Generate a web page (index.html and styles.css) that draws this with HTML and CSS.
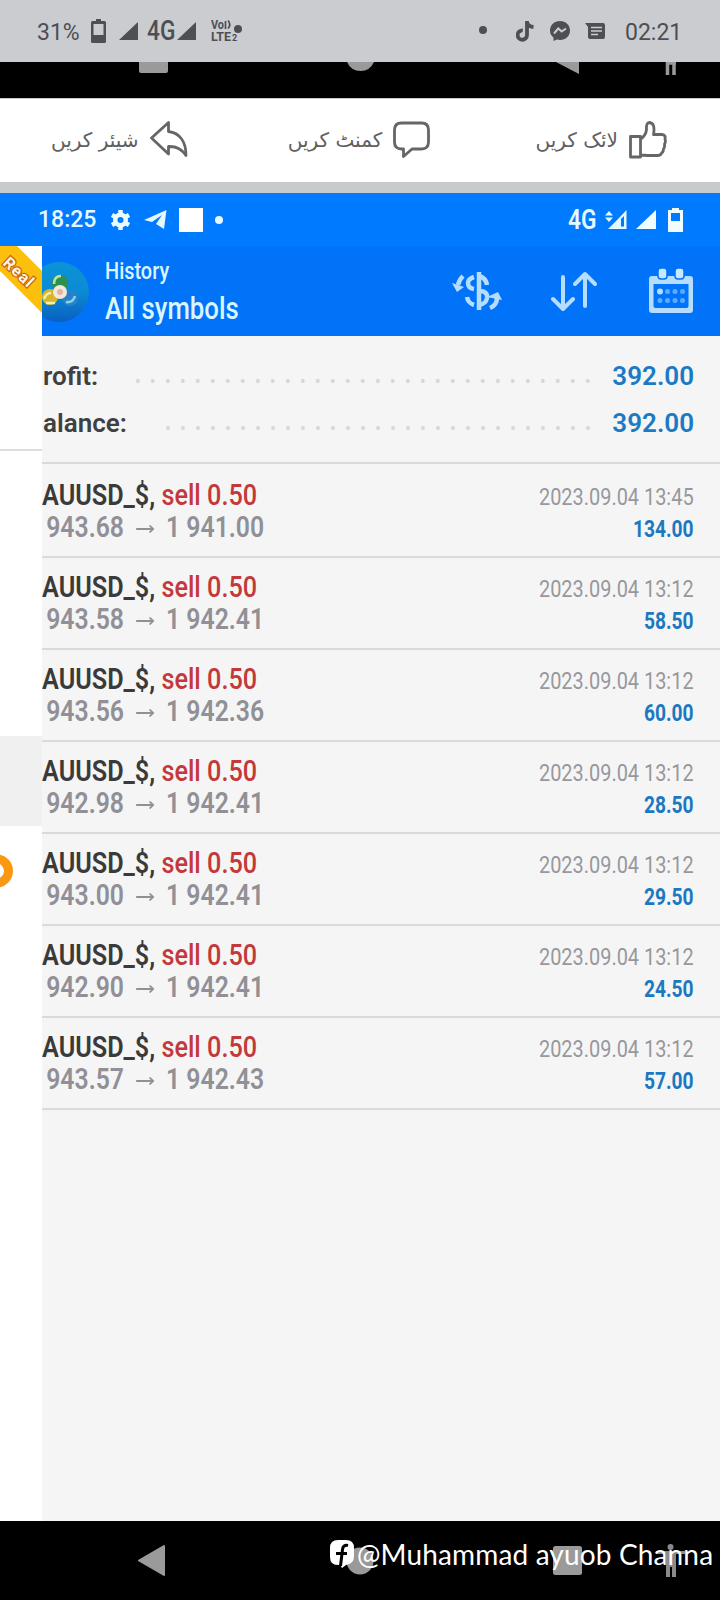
FILE: index.html
```html
<!DOCTYPE html>
<html lang="ur">
  <head>
    <meta charset="UTF-8" />
    <meta name="viewport" content="width=device-width, initial-scale=1.0" />
    <title>History</title>
    <link rel="stylesheet" href="styles.css">
  </head>
  <body>
    <div class="phone-status">
      <span class="battery-text">31%</span>
      <svg class="i-battery" width="15" height="24" viewBox="0 0 15 24"><path fill="#4d4f55" fill-rule="evenodd" d="M5 0h5v2h3.500q1.500 0 1.500 1.500v19q0 1.500-1.500 1.500h-12q-1.500 0-1.500-1.500v-19Q0 2 1.500 2H5zM2.500 5v11h10V5z" /></svg>
      <svg class="i-sig" width="19" height="18" viewBox="0 0 19 18"><path fill="#4d4f55" d="M19 0v18H0z" /></svg>
      <span class="net"><span class="narrow">4G</span></span>
      <svg width="19" height="18" viewBox="0 0 19 18"><path fill="#4d4f55" d="M19 0v18H0z" /></svg>
      <svg class="i-volte" width="32" height="24" viewBox="0 0 32 24" fill="#4d4f55">
        <text class="volte" x="0" y="10" textLength="13" lengthAdjust="spacingAndGlyphs">Vo</text>
        <path d="M14.500 2v8M17 1.500q3.500 4 0 8" fill="none" stroke="#4d4f55" stroke-width="1.700" />
        <text class="volte" x="0" y="22" textLength="20" lengthAdjust="spacingAndGlyphs">LTE</text>
        <text class="volte small" x="21" y="22">2</text>
        <circle cx="27" cy="10" r="4" />
      </svg>
      <span class="dot"></span>
      <svg class="i-tiktok" width="18" height="21" viewBox="0 0 18 21"><path fill="none" stroke="#4d4f55" stroke-width="3.800" d="M11 0v14a4.700 4.700 0 1 1-4.200-4.600M11 1q.6 4.500 6.500 5" /></svg>
      <svg class="i-messenger" width="20" height="20" viewBox="0 0 20 20"><path fill="#4d4f55" d="M10 0c5.700 0 10 4 10 9.500S15.700 19 10 19q-1.500 0-3-.4L3.500 20v-3.400Q0 13.800 0 9.500C0 4 4.300 0 10 0z" /><path d="M4 12.500l4.300-5 3.400 3 4.300-3" fill="none" stroke="#cacccf" stroke-width="2" /></svg>
      <svg class="i-message" width="20" height="16" viewBox="0 0 20 16"><path fill="#4d4f55" d="M0 0h18q2 0 2 2v12q0 2-2 2H5q-2 0-2-2V4z" /><path d="M6 4.500h11M6 8h11M6 11.500h7" stroke="#cacccf" stroke-width="1.500" /></svg>
      <span class="clock">02:21</span>
    </div>

    <svg class="nav-strip" width="720" height="36" viewBox="0 0 720 36">
      <path fill="#9a9a9a" d="M139 0h29v9q0 2-2 2h-25q-2 0-2-2zM347 0h27q-4 9-13.500 9T347 0zM556 0h23v12z" />
      <path fill="none" stroke="#9a9a9a" stroke-width="3.500" d="M667.500 13V0M674 13V0M666 1h10" />
    </svg>

    <div class="actions">
      <div class="action share">
        <span class="label">شیئر کریں</span>
        <svg width="38" height="38" viewBox="0 0 38 38"><path d="M1.500 17L18.500 1.500v9C30 12 36 21 36 34.500q-6-9.500-17.500-9V33z" /></svg>
      </div>
      <div class="action comment">
        <span class="label">کمنٹ کریں</span>
        <svg width="37" height="38" viewBox="0 0 37 38"><path d="M8.500 2h20q7 0 7 7v12q0 7-7 7H19l-8.500 7.500V28H8.500q-7 0-7-7V9q0-7 7-7z" /></svg>
      </div>
      <div class="action like">
        <span class="label">لائک کریں</span>
        <svg width="38" height="38" viewBox="0 0 38 38"><path d="M1.500 15.500h10v20.500h-10zM12 18q5-4 5.500-9.500Q17 1.500 20.500 1.500q6 .5 4 12h8.500q4 .5 3 4.500 1 3-.5 5 .5 3-1 5 0 3-2 4-.5 2.500-4 2.500h-10l-7-.5" /></svg>
      </div>
    </div>

    <div class="shot">
      <div class="shot-status">
        <span class="time">18:25</span>
        <svg class="i-gear" width="19" height="20" viewBox="0 0 19 20"><circle cx="9.500" cy="10" r="5.300" fill="none" stroke="#e9fbff" stroke-width="4.500" /><path d="M9.500 0v4M9.500 16v4M1 5l3.500 2M14.500 13l3.500 2M1 15l3.500-2M14.500 7L18 5" stroke="#e9fbff" stroke-width="4.500" /></svg>
        <svg class="i-plane" width="23" height="20" viewBox="0 0 23 20"><path fill="#e4f7ff" d="M22.500 0L20 19l-8-5L18 5 8 12 0 10z" /></svg>
        <span class="square"></span>
        <span class="dot"></span>
        <span class="net"><span class="narrow">4G</span></span>
        <svg class="i-data" width="22" height="20" viewBox="0 0 22 20"><path fill="#e4f9ff" d="M0 5.500L4 1l4 4.500zM0 7.500h8L4 12zM21.500 0v19H3L14 8z" /><path d="M19 6v10.500h-3V9z" fill="#0078ff" /></svg>
        <svg class="i-full" width="20" height="19" viewBox="0 0 20 19"><path fill="#f0fdff" d="M20 0v19H0z" /></svg>
        <svg width="15" height="24" viewBox="0 0 15 24"><path fill="#f0fdff" fill-rule="evenodd" d="M4 0h7v2h4v22H0V2h4zM3 5v8h9V5z" /></svg>
      </div>

      <div class="panes">
        <div class="drawer">
          <svg class="ribbon" width="42" height="70" viewBox="0 0 42 70"><path fill="#fbbf0c" d="M0 0h17l25 25v42L0 25z" /><text x="0" y="0" transform="translate(2 18) rotate(43)" textLength="35">Real</text></svg>
          <div class="drawer-line"></div>
          <div class="drawer-selected"></div>
          <svg class="badge" width="42" height="34" viewBox="0 0 42 34"><circle cx="-3.500" cy="17" r="12" fill="none" stroke="#fb9812" stroke-width="9" /></svg>
        </div>

        <div class="main">
          <div class="header">
            <svg class="logo" width="47" height="62" viewBox="0 0 47 62">
              <defs><linearGradient id="sky" x1="0" y1="0" x2="0" y2="1"><stop offset="0" stop-color="#0b93d8" /><stop offset=".5" stop-color="#0b8bd4" /><stop offset="1" stop-color="#0a5fc0" /></linearGradient></defs>
              <circle cx="17" cy="31" r="30" fill="url(#sky)" />
              <circle cx="18" cy="22" r="8" fill="#2f8f4e" />
              <path d="M12 23q0-8 7-8" fill="none" stroke="#b9e3a0" stroke-width="2.500" />
              <circle cx="8" cy="36" r="8" fill="#d6b52f" />
              <path d="M2 38q2-6 7-6M4 42h9" fill="none" stroke="#f8efa0" stroke-width="2.500" />
              <circle cx="28" cy="37" r="8" fill="#2683c8" />
              <path d="M24 41q7 1 9-6" fill="none" stroke="#8fd0ee" stroke-width="2.500" />
              <circle cx="18" cy="31" r="7" fill="#f4e9d6" />
              <circle cx="18" cy="31" r="3" fill="#e2b5a8" />
            </svg>
            <div class="titles">
              <div class="title">History</div>
              <div class="subtitle">All symbols</div>
            </div>
            <svg class="i-currency" width="50" height="40" viewBox="0 0 50 40" fill="none" stroke="#b5ddff" stroke-width="4.500">
              <path d="M27 1v38" />
              <path d="M27 5q7 2 8 9M27 20q9 0 8 7-1 6-8 7" />
              <path d="M22 6q-6 2-6 6 0 5 6 6M15 26q1 6 7 8M11 5q-4 4-5 9M38 37q7-3 7-10" />
              <path fill="#b5ddff" stroke="none" d="M0 12l12 4-7 5zM35 26l11-5 4 8z" />
            </svg>
            <svg class="i-sort" width="46" height="41" viewBox="0 0 46 41"><path fill="none" stroke="#b5ddff" stroke-width="4" stroke-linecap="round" stroke-linejoin="round" d="M12 6v32M2 28l10 10 10-10M34 35V3M24 13L34 3l10 10" /></svg>
            <svg class="i-calendar" width="44" height="46" viewBox="0 0 44 46">
              <path fill="#b5ddff" fill-rule="evenodd" d="M3 8h38q3 0 3 3v31q0 3-3 3H3q-3 0-3-3V11q0-3 3-3zM4.500 16v22q0 2 2 2h31q2 0 2-2V16z" />
              <rect x="9" y="0" width="9" height="11" rx="3" fill="#c9e8ff" stroke="#0073f8" stroke-width="1.500" />
              <rect x="26" y="0" width="9" height="11" rx="3" fill="#c9e8ff" stroke="#0073f8" stroke-width="1.500" />
              <circle cx="11" cy="23.500" r="3" fill="#b5ddff" />
              <g fill="#58adff"><circle cx="18.500" cy="23.500" r="2.500" /><circle cx="26" cy="23.500" r="2.500" /><circle cx="33.500" cy="23.500" r="2.500" /><circle cx="11" cy="32.500" r="2.500" /><circle cx="18.500" cy="32.500" r="2.500" /><circle cx="26" cy="32.500" r="2.500" /><circle cx="33.500" cy="32.500" r="2.500" /></g>
            </svg>
          </div>

          <div class="summary">
            <div class="total profit"><span>rofit:</span><span class="leader"></span><b>392.00</b></div>
            <div class="total balance"><span>alance:</span><span class="leader"></span><b>392.00</b></div>
          </div>

          <div class="deals">
            <div class="deal">
              <div class="left">
                <div class="symbol">AUUSD_$, <span class="sell">sell 0.50</span></div>
                <div class="price">943.68<svg class="arrow" viewBox="0 0 22 10"><path d="M0 5h20M16 1.500L20.500 5 16 8.500" /></svg>1 941.00</div>
              </div>
              <div class="right"><div class="date">2023.09.04 13:45</div><div class="amount">134.00</div></div>
            </div>
            <div class="deal">
              <div class="left">
                <div class="symbol">AUUSD_$, <span class="sell">sell 0.50</span></div>
                <div class="price">943.58<svg class="arrow" viewBox="0 0 22 10"><path d="M0 5h20M16 1.500L20.500 5 16 8.500" /></svg>1 942.41</div>
              </div>
              <div class="right"><div class="date">2023.09.04 13:12</div><div class="amount">58.50</div></div>
            </div>
            <div class="deal">
              <div class="left">
                <div class="symbol">AUUSD_$, <span class="sell">sell 0.50</span></div>
                <div class="price">943.56<svg class="arrow" viewBox="0 0 22 10"><path d="M0 5h20M16 1.500L20.500 5 16 8.500" /></svg>1 942.36</div>
              </div>
              <div class="right"><div class="date">2023.09.04 13:12</div><div class="amount">60.00</div></div>
            </div>
            <div class="deal">
              <div class="left">
                <div class="symbol">AUUSD_$, <span class="sell">sell 0.50</span></div>
                <div class="price">942.98<svg class="arrow" viewBox="0 0 22 10"><path d="M0 5h20M16 1.500L20.500 5 16 8.500" /></svg>1 942.41</div>
              </div>
              <div class="right"><div class="date">2023.09.04 13:12</div><div class="amount">28.50</div></div>
            </div>
            <div class="deal">
              <div class="left">
                <div class="symbol">AUUSD_$, <span class="sell">sell 0.50</span></div>
                <div class="price">943.00<svg class="arrow" viewBox="0 0 22 10"><path d="M0 5h20M16 1.500L20.500 5 16 8.500" /></svg>1 942.41</div>
              </div>
              <div class="right"><div class="date">2023.09.04 13:12</div><div class="amount">29.50</div></div>
            </div>
            <div class="deal">
              <div class="left">
                <div class="symbol">AUUSD_$, <span class="sell">sell 0.50</span></div>
                <div class="price">942.90<svg class="arrow" viewBox="0 0 22 10"><path d="M0 5h20M16 1.500L20.500 5 16 8.500" /></svg>1 942.41</div>
              </div>
              <div class="right"><div class="date">2023.09.04 13:12</div><div class="amount">24.50</div></div>
            </div>
            <div class="deal">
              <div class="left">
                <div class="symbol">AUUSD_$, <span class="sell">sell 0.50</span></div>
                <div class="price">943.57<svg class="arrow" viewBox="0 0 22 10"><path d="M0 5h20M16 1.500L20.500 5 16 8.500" /></svg>1 942.43</div>
              </div>
              <div class="right"><div class="date">2023.09.04 13:12</div><div class="amount">57.00</div></div>
            </div>
          </div>
        </div>
      </div>
    </div>

    <div class="navbar">
      <svg width="720" height="79" viewBox="0 0 720 79">
        <path fill="#9a9a9a" stroke="#9a9a9a" stroke-width="2" stroke-linejoin="round" d="M139 39.500L164 25v29z" />
        <circle cx="360" cy="40" r="13.500" fill="#9a9a9a" />
        <rect x="553" y="25" width="29" height="29" rx="2.500" fill="#9a9a9a" />
        <g fill="#8a8a8a"><circle cx="670.500" cy="26" r="3" /><path d="M656 30h29v3h-9v23h-4V46h-2v10h-4V33h-10z" /></g>
      </svg>
      <div class="credit">
        <svg width="24" height="28" viewBox="0 0 24 28"><path fill="#fff" d="M8 0h8q8 0 8 8v8q0 8-8 9l-4 3-2-3H8q-8 0-8-8V8q0-8 8-8z" /><path d="M18 5.500q-5-1-5.500 4L10.500 26M6 13.500h11" fill="none" stroke="#000" stroke-width="3" /></svg>
        <span>@Muhammad ayuob Channa</span>
      </div>
    </div>
  </body>
</html>
```

FILE: styles.css
```css
* {
  box-sizing: border-box;
}
body {
  margin: 0;
  width: 720px;
  height: 1600px;
  overflow: hidden;
  display: flex;
  flex-direction: column;
  background: #000;
  font-family: Roboto, "Liberation Sans", sans-serif;
}
svg {
  display: block;
  flex: none;
}
.narrow {
  display: inline-block;
  transform: scaleX(0.84);
  transform-origin: left;
}

/* phone status bar */
.phone-status {
  height: 62px;
  flex: none;
  display: flex;
  align-items: center;
  padding-left: 37px;
  background: #cacccf;
  color: #4d4f55;
  font-size: 23px;
}
.battery-text {
  width: 54px;
  padding-top: 2px;
}
.i-sig {
  margin-left: 13px;
}
.phone-status .net {
  width: 30px;
  margin-left: 9px;
  font-size: 27px;
  font-weight: 500;
}
.i-volte {
  margin-left: 15px;
}
.volte {
  font-size: 12px;
  font-weight: bold;
}
.volte.small {
  font-size: 9px;
}
.dot {
  width: 8px;
  height: 8px;
  border-radius: 50%;
}
.phone-status .dot {
  margin: 0 0 2px 236px;
  background: #4d4f55;
}
.i-tiktok {
  margin-left: 29px;
}
.i-messenger {
  margin-left: 16px;
}
.i-message {
  margin-left: 15px;
}
.clock {
  margin-left: 20px;
  padding-top: 2px;
}
.nav-strip {
  background: #000;
}

/* reactions row */
.actions {
  height: 95px;
  flex: none;
  display: flex;
  justify-content: space-between;
  align-items: center;
  padding: 0 53px 11px 51px;
  background: #fff;
  border-top: 1px solid #c9c9c9;
  border-bottom: 11px solid #c8cbcc;
}
.action {
  display: flex;
  align-items: center;
  gap: 11px;
  padding-top: 10px;
}
.action.comment {
  margin-right: 5px;
}
.action svg {
  fill: none;
  stroke: #666;
  stroke-width: 2.8;
  stroke-linejoin: round;
}
.label {
  direction: rtl;
  color: #606060;
  font-family: "DejaVu Sans", sans-serif;
  font-size: 20px;
  white-space: nowrap;
}

/* terminal screen */
.shot {
  height: 1328px;
  flex: none;
  display: flex;
  flex-direction: column;
}
.shot-status {
  height: 53px;
  display: flex;
  align-items: center;
  padding-left: 38px;
  background: #007aff;
  color: #e4f9ff;
}
.time {
  width: 73px;
  font-size: 23px;
  font-weight: 500;
}
.i-plane {
  margin-left: 14px;
}
.square {
  width: 24px;
  height: 24px;
  margin-left: 12px;
  background: #fff;
}
.shot-status .dot {
  margin-left: 12px;
  background: #e4f9ff;
}
.shot-status .net {
  width: 37px;
  margin-left: 345px;
  font-size: 27px;
  font-weight: 600;
}
.i-full {
  margin: 0 12px 0 9px;
}
.panes {
  flex: 1;
  display: flex;
}
.drawer {
  width: 42px;
  background: #fff;
  overflow: hidden;
}
.ribbon text {
  font: bold 16px Roboto, sans-serif;
  fill: #fff6d8;
  stroke: #c8641a;
  stroke-width: 2.5px;
  paint-order: stroke;
}
.drawer-line {
  height: 2px;
  margin-top: 133px;
  background: #ddd;
}
.drawer-selected {
  height: 90px;
  margin-top: 285px;
  background: #f0f0f0;
}
.badge {
  margin-top: 28px;
}
.main {
  flex: 1;
  background: #f5f5f5;
}
.header {
  height: 90px;
  display: flex;
  align-items: center;
  padding-right: 27px;
  background: #0073f8;
  color: #d9f6ff;
}
.logo {
  margin-top: 2px;
}
.titles {
  width: 347px;
  margin-left: 16px;
  align-self: flex-start;
  padding-top: 9px;
  white-space: nowrap;
}
.title {
  font-size: 24px;
  font-weight: 500;
  line-height: 32px;
  transform: scaleX(0.83);
  transform-origin: left;
}
.subtitle {
  font-size: 31px;
  font-weight: 500;
  line-height: 44px;
  transform: scaleX(0.83);
  transform-origin: left;
}
.i-sort {
  margin-left: 49px;
}
.i-calendar {
  margin-left: 52px;
}

.summary {
  height: 128px;
  padding: 15.5px 26px 0 1px;
  border-bottom: 2px solid #dadada;
}
.total {
  display: flex;
  height: 47px;
  line-height: 48px;
  font-size: 26px;
  font-weight: 600;
  color: #404040;
}
.total b {
  color: #1c7ac4;
  font-weight: 600;
}
.leader {
  flex: 1;
  height: 4px;
  margin: 27px 17px 0 33px;
  background: radial-gradient(circle, #d6d6d6 1.7px, transparent 2.2px) right / 15px 4px repeat-x;
}

.deal {
  height: 92px;
  display: flex;
  justify-content: space-between;
  padding: 12.5px 26px 0 0;
  border-bottom: 2px solid #dadada;
  line-height: 32px;
  white-space: nowrap;
}
.deal:first-child {
  height: 94px;
  padding-top: 14.5px;
}
.symbol,
.price {
  font-size: 29.5px;
  font-weight: 600;
  transform-origin: left;
}
.symbol {
  color: #3a3a3a;
  transform: scaleX(0.855);
}
.sell {
  color: #c4383b;
  font-weight: 500;
}
.price {
  display: flex;
  align-items: center;
  color: #909096;
  padding-left: 5px;
  transform: scaleX(0.84);
}
.arrow {
  width: 22px;
  height: 10px;
  margin: 5px 14px 0 14px;
  fill: none;
  stroke: #909096;
  stroke-width: 1.8;
}
.right {
  padding-top: 2px;
  text-align: right;
}
.date {
  font-size: 24.3px;
  color: #98989c;
  transform: scaleX(0.82);
  transform-origin: right;
}
.amount {
  font-size: 24px;
  font-weight: bold;
  color: #1c78c0;
  transform: scaleX(0.8);
  transform-origin: right;
}

/* bottom bar with the poster's name over the nav buttons */
.navbar {
  position: relative;
  height: 79px;
  flex: none;
}
.credit {
  position: absolute;
  left: 330px;
  top: 17px;
  display: flex;
  align-items: center;
  gap: 3px;
  color: #fff;
  font: 28px/32px Lato, sans-serif;
  letter-spacing: 0.15px;
  white-space: nowrap;
}
```
